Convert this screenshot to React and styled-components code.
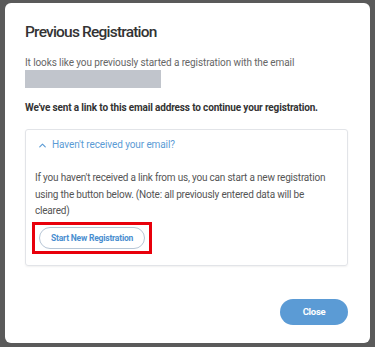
import React from 'react';
import styled, { createGlobalStyle } from 'styled-components';
import { ChevronUp } from 'lucide-react';

const GlobalStyle = createGlobalStyle`
  html, body {
    margin: 0;
    padding: 0;
    background: #5a5a5a;
  }
  * {
    box-sizing: border-box;
  }
`;

const Backdrop = styled.div`
  width: 375px;
  height: 347px;
  padding: 3px 5px 4px 5px;
  background: #5a5a5a;
  font-family: Roboto, "Liberation Sans", sans-serif;
`;

const Modal = styled.div`
  height: 340px;
  background: #fff;
  border-radius: 6px;
  padding: 18px 22px 0 20px;
  display: flex;
  flex-direction: column;
`;

const Title = styled.h2`
  margin: 0;
  font-size: 15.5px;
  line-height: 22px;
  font-weight: 500;
  color: #333;
  letter-spacing: -0.8px;
`;

const Text = styled.p`
  margin: ${p => p.$mt || 0}px 0 0;
  font-size: 10px;
  line-height: 15px;
  color: ${p => (p.$bold ? '#333' : '#666')};
  font-weight: ${p => (p.$bold ? 700 : 400)};
  letter-spacing: ${p => (p.$bold ? '-0.15px' : '-0.1px')};
`;

const Redacted = styled.div`
  width: 136px;
  height: 18px;
  background: #c1c5cc;
`;

const Card = styled.div`
  margin-top: 14px;
  border: 1px solid #e2e4e8;
  border-radius: 3px;
  box-shadow: 0 1px 2px rgba(0, 0, 0, 0.06);
  padding: 7px 6px 11px 9px;
`;

const Toggle = styled.div`
  display: flex;
  align-items: center;
  gap: 4px;
  color: #5b9bd5;
  font-size: 10px;
  line-height: 16px;
  padding-left: 2px;
  letter-spacing: -0.1px;
`;

const CardText = styled.p`
  margin: 17px 0 0;
  max-width: 296px;
  font-size: 10px;
  line-height: 16.5px;
  color: #555;
  letter-spacing: -0.2px;
`;

const Highlight = styled.div`
  display: flex;
  width: fit-content;
  margin: 2px 0 0 -3px;
  padding: 2px 4px;
  border: 3px solid #e8000b;
`;

const PillButton = styled.button`
  font-family: inherit;
  height: 22px;
  padding: 0 11px;
  border-radius: 11px;
  border: 1px solid #b7c6d6;
  background: #fff;
  color: #4a8ed0;
  font-weight: 700;
  font-size: 8.5px;
  letter-spacing: -0.2px;
  cursor: pointer;
`;

const Footer = styled.div`
  display: flex;
  justify-content: flex-end;
  margin-top: 33px;
`;

const CloseButton = styled.button`
  font-family: inherit;
  width: 68px;
  height: 26px;
  border-radius: 13px;
  border: none;
  background: #5b9bd5;
  color: #fff;
  font-weight: 700;
  font-size: 9.5px;
  letter-spacing: -0.3px;
  cursor: pointer;
`;

export default function App() {
  return (
    <>
      <GlobalStyle />
      <Backdrop>
        <Modal>
          <Title>Previous Registration</Title>
          <Text $mt={12}>It looks like you previously started a registration with the email</Text>
          <Redacted />
          <Text $bold $mt={12}>We've sent a link to this email address to continue your registration.</Text>
          <Card>
            <Toggle>
              <ChevronUp size={11} strokeWidth={2.5} />
              Haven't received your email?
            </Toggle>
            <CardText>
              If you haven't received a link from us, you can start a new registration using the button below. (Note: all previously entered data will be cleared)
            </CardText>
            <Highlight>
              <PillButton>Start New Registration</PillButton>
            </Highlight>
          </Card>
          <Footer>
            <CloseButton>Close</CloseButton>
          </Footer>
        </Modal>
      </Backdrop>
    </>
  );
}
